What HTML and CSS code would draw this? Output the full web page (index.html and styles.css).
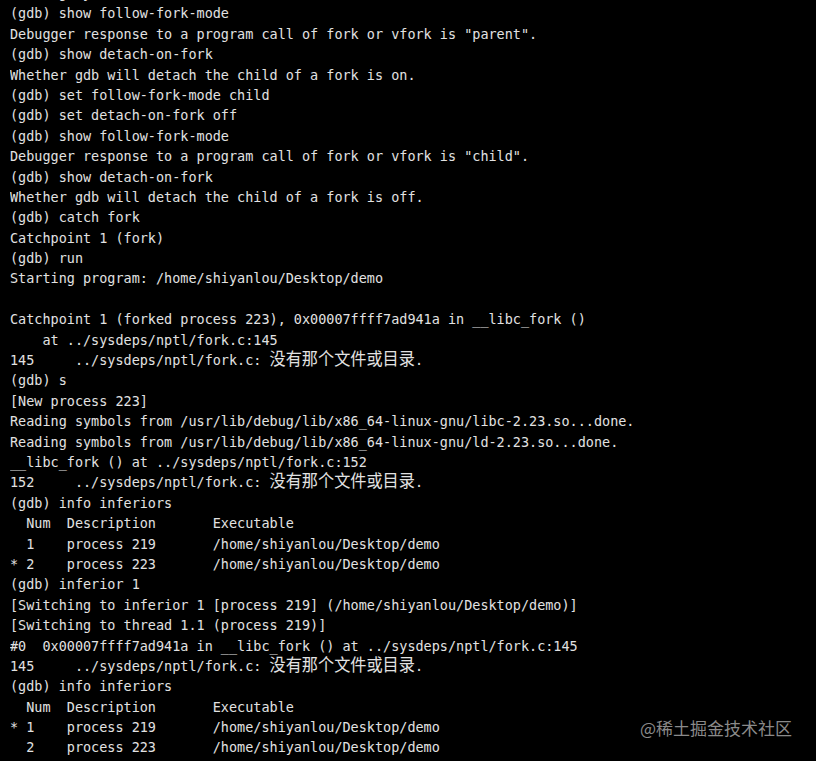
FILE: index.html
```html
<!DOCTYPE html>
<html lang="zh">
<head>
<meta charset="utf-8">
<title>gdb</title>
<link rel="stylesheet" href="styles.css">
</head>
<body>
<div class="term">
<pre class="out">Reading symbols from demo...done.
(gdb) show follow-fork-mode
Debugger response to a program call of fork or vfork is "parent".
(gdb) show detach-on-fork
Whether gdb will detach the child of a fork is on.
(gdb) set follow-fork-mode child
(gdb) set detach-on-fork off
(gdb) show follow-fork-mode
Debugger response to a program call of fork or vfork is "child".
(gdb) show detach-on-fork
Whether gdb will detach the child of a fork is off.
(gdb) catch fork
Catchpoint 1 (fork)
(gdb) run
Starting program: /home/shiyanlou/Desktop/demo

Catchpoint 1 (forked process 223), 0x00007ffff7ad941a in __libc_fork ()
    at ../sysdeps/nptl/fork.c:145
145     ../sysdeps/nptl/fork.c: <span class="cjk">没有那个文件或目录</span>.
(gdb) s
[New process 223]
Reading symbols from /usr/lib/debug/lib/x86_64-linux-gnu/libc-2.23.so...done.
Reading symbols from /usr/lib/debug/lib/x86_64-linux-gnu/ld-2.23.so...done.
__libc_fork () at ../sysdeps/nptl/fork.c:152
152     ../sysdeps/nptl/fork.c: <span class="cjk">没有那个文件或目录</span>.
(gdb) info inferiors
  Num  Description       Executable
  1    process 219       /home/shiyanlou/Desktop/demo
* 2    process 223       /home/shiyanlou/Desktop/demo
(gdb) inferior 1
[Switching to inferior 1 [process 219] (/home/shiyanlou/Desktop/demo)]
[Switching to thread 1.1 (process 219)]
#0  0x00007ffff7ad941a in __libc_fork () at ../sysdeps/nptl/fork.c:145
145     ../sysdeps/nptl/fork.c: <span class="cjk">没有那个文件或目录</span>.
(gdb) info inferiors
  Num  Description       Executable
* 1    process 219       /home/shiyanlou/Desktop/demo
  2    process 223       /home/shiyanlou/Desktop/demo</pre>
<div class="mark">@稀土掘金技术社区</div>
</div>
</body>
</html>
```

FILE: styles.css
```css
html, body {
  margin: 0;
  padding: 0;
  background: #000;
  height: 100%;
  overflow: hidden;
}

.term {
  position: relative;
  width: 816px;
  height: 761px;
  overflow: hidden;
  background: #000;
}

.out {
  margin: -17px 0 0 10px;
  padding: 0;
  font-family: "DejaVu Sans Mono", "Noto Sans CJK SC", monospace;
  font-size: 14.5px;
  line-height: 20.39px;
  color: #e2e2e2;
  white-space: pre;
  transform: scaleX(0.929);
  transform-origin: 0 0;
}

.cjk {
  font-family: "Noto Sans CJK SC", sans-serif;
  font-size: 17.4px;
  line-height: 0;
}

.mark {
  position: absolute;
  right: 24px;
  top: 716px;
  font-family: "Noto Sans CJK SC", sans-serif;
  font-size: 17px;
  line-height: 24px;
  color: #8a8a8a;
}
```
